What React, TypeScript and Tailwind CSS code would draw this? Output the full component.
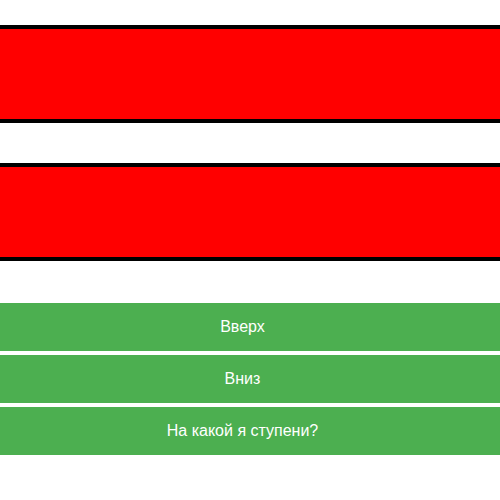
export default function App() {
  const buttons = ['Вверх', 'Вниз', 'На какой я ступени?']

  return (
    <div className="min-h-[500px] bg-white pt-[25px] font-['Liberation_Sans',Arial,sans-serif]">
      <div className="flex flex-col gap-[40px]">
        <div className="h-[98px] border-y-4 border-black bg-[#ff0000]" />
        <div className="h-[98px] border-y-4 border-black bg-[#ff0000]" />
      </div>

      <div className="mt-[42px] flex flex-col gap-[4px]">
        {buttons.map((label) => (
          <button
            key={label}
            type="button"
            className="flex h-[48px] w-full items-center justify-center bg-[#4caf50] pr-[15px] text-base text-white"
          >
            {label}
          </button>
        ))}
      </div>
    </div>
  )
}
